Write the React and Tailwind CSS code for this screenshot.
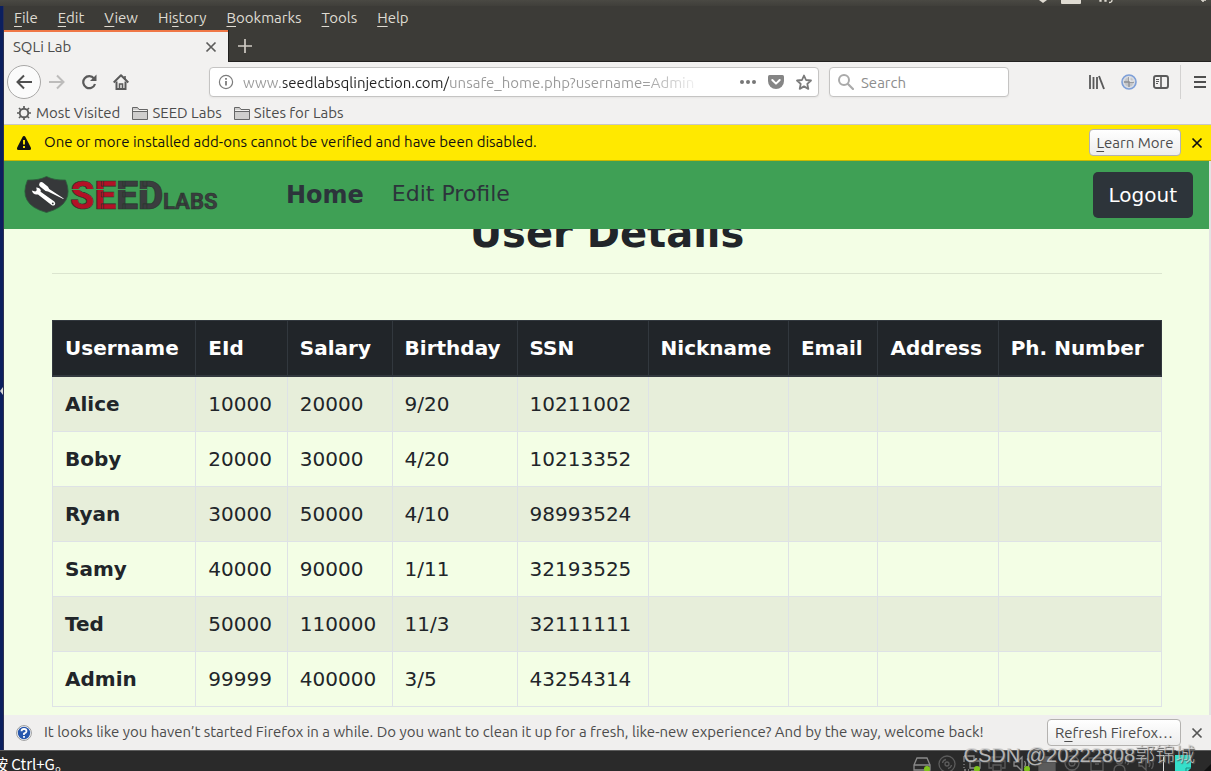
import React from "react";

const uiFont = "font-['Ubuntu','Open_Sans','Noto_Sans_CJK_SC',sans-serif]";

const menus = [
  ["", "F", "ile"],
  ["", "E", "dit"],
  ["", "V", "iew"],
  ["Hi", "s", "tory"],
  ["", "B", "ookmarks"],
  ["", "T", "ools"],
  ["", "H", "elp"],
];

const columns = ["Username", "EId", "Salary", "Birthday", "SSN", "Nickname", "Email", "Address", "Ph. Number"];

const rows = [
  ["Alice", "10000", "20000", "9/20", "10211002"],
  ["Boby", "20000", "30000", "4/20", "10213352"],
  ["Ryan", "30000", "50000", "4/10", "98993524"],
  ["Samy", "40000", "90000", "1/11", "32193525"],
  ["Ted", "50000", "110000", "11/3", "32111111"],
  ["Admin", "99999", "400000", "3/5", "43254314"],
];

function Key({ children }) {
  return <span className="underline decoration-1 underline-offset-3">{children}</span>;
}

function Icon({ size = 16, children, ...rest }) {
  return (
    <svg width={size} height={size} viewBox={`0 0 ${size} ${size}`} fill="none" aria-hidden="true" className="block shrink-0" {...rest}>
      {children}
    </svg>
  );
}

function Cross({ color = "#555", width = 1.7 }) {
  return (
    <Icon size={12}>
      <path d="M1.500 1.500l9 9M10.500 1.500l-9 9" stroke={color} strokeWidth={width} />
    </Icon>
  );
}

function TopPanel() {
  return (
    <div className="flex h-[6px] shrink-0 justify-end overflow-hidden bg-linear-to-b from-[#4a4943] to-[#403f3a]">
      <svg width="180" height="6" viewBox="0 0 180 6" aria-hidden="true">
        <path d="M8 0h8l-4 3z" fill="#dfdbd2" />
        <path d="M30 0h20v3q0 1-1 1H31q-1 0-1-1z" fill="#dfdbd2" />
        <path d="M69 0h1v1h-1zM74 0h1v1h-1zM81 0q0 2.500-3 2.500" stroke="#dfdbd2" strokeWidth="1.300" fill="none" />
        <path d="M170 0h5M172 0v2" stroke="#dfdbd2" strokeWidth="1.500" />
      </svg>
    </div>
  );
}

function MenuBar() {
  return (
    <nav aria-label="Menu" className="flex h-6 items-center gap-5 bg-[#3c3b37] pl-[10px] text-[15px] leading-6 text-[#dfdbd2]">
      {menus.map(([a, k, b]) => (
        <button key={a + k + b} type="button" className="whitespace-nowrap">
          {a}
          <Key>{k}</Key>
          {b}
        </button>
      ))}
    </nav>
  );
}

function TabStrip() {
  return (
    <div className="flex h-8 bg-[#3c3b37]">
      <div className="flex w-[224px] items-center justify-between border-t-2 border-[#f07746] bg-[#f2f1f0] pr-[11px] pl-[9px] text-[15px] text-[#4c4c4c]">
        <span className="leading-6">SQLi Lab</span>
        <button type="button" aria-label="Close tab">
          <Cross color="#5d5c5b" />
        </button>
      </div>
      <div className="flex flex-1 items-center border-b border-l border-[#222120] pl-[9px]">
        <button type="button" aria-label="New tab">
          <Icon size={14}>
            <path d="M7 0v14M0 7h14" stroke="#cfcbc4" strokeWidth="1.700" />
          </Icon>
        </button>
      </div>
    </div>
  );
}

function Toolbar() {
  return (
    <div className="flex h-10 items-center bg-[#f2f1f0] pl-[3px] text-[15px] text-[#5c5c5c]">
      <button type="button" aria-label="Back" className="flex size-[34px] items-center justify-center rounded-full border border-[#a9a8a7] bg-[#fbfbfb]">
        <Icon>
          <path d="M8 1.500L1.500 8 8 14.500M1.500 8H16" stroke="#4f4f4f" strokeWidth="2" />
        </Icon>
      </button>
      <button type="button" aria-label="Forward" className="ml-2">
        <Icon>
          <path d="M8 1.500L14.500 8 8 14.500M14.500 8H0" stroke="#bdbcbb" strokeWidth="2" />
        </Icon>
      </button>
      <button type="button" aria-label="Reload" className="ml-4">
        <Icon>
          <path d="M13 4.500A6 6 0 1 0 14 10" stroke="#5a5a5a" strokeWidth="2.200" />
          <path d="M15.500 0.500v6.500H9z" fill="#5a5a5a" />
        </Icon>
      </button>
      <button type="button" aria-label="Home" className="ml-4">
        <Icon>
          <path d="M0.700 8.500L8 1.300l7.300 7.200" stroke="#5a5a5a" strokeWidth="2" strokeLinejoin="round" />
          <path d="M3.500 7.500V15h9V7.500" stroke="#5a5a5a" strokeWidth="2" />
          <path d="M12 2v4M6.500 15v-5h3v5z" stroke="#5a5a5a" strokeWidth="1.600" />
        </Icon>
      </button>

      <div className="ml-20 flex h-[30px] flex-1 items-center rounded border border-[#c5c4c3] bg-white pr-[6px] pl-2 shadow-xs">
        <Icon>
          <circle cx="8" cy="8" r="6.600" stroke="#7c7c7c" strokeWidth="1.200" />
          <path d="M8 7v4.500M8 4v1.800" stroke="#7c7c7c" strokeWidth="1.800" />
        </Icon>
        <input
          aria-label="Address"
          type="text"
          defaultValue="www.seedlabsqlinjection.com/unsafe_home.php?username=Admin"
          className="ml-[9px] h-6 w-0 min-w-0 flex-1 bg-[linear-gradient(90deg,#999_0px,#999_40px,#222_40px,#222_206px,#999_206px,#999_400px,transparent_460px)] bg-clip-text text-[15px] text-transparent outline-none"
        />
        <button type="button" aria-label="Page actions" className="ml-[38px]">
          <Icon>
            <g fill="#777">
              <circle cx="2" cy="8" r="2" />
              <circle cx="8" cy="8" r="2" />
              <circle cx="14" cy="8" r="2" />
            </g>
          </Icon>
        </button>
        <button type="button" aria-label="Save to Pocket" className="ml-3">
          <Icon>
            <path d="M1.500 1h13q1.500 0 1.500 1.500V7a8 8 0 0 1-16 0V2.500Q0 1 1.500 1z" fill="#858585" />
            <path d="M4.300 6l3.700 3.600L11.700 6" stroke="#fff" strokeWidth="2" strokeLinecap="round" strokeLinejoin="round" />
          </Icon>
        </button>
        <button type="button" aria-label="Bookmark this page" className="ml-3">
          <Icon>
            <path d="M8 1.500l2 4.500 5 .5-3.700 3.400 1 5L8 12.400 3.700 14.900l1-5L1 6.500l5-.5z" stroke="#7a7a7a" strokeWidth="1.800" strokeLinejoin="round" />
          </Icon>
        </button>
      </div>

      <div className="ml-[10px] flex h-[30px] w-[180px] items-center rounded border border-[#c5c4c3] bg-white pl-2 shadow-xs">
        <Icon>
          <circle cx="6" cy="6" r="5" stroke="#aaa" strokeWidth="2" />
          <path d="M9.700 9.700l6 6" stroke="#aaa" strokeWidth="2.200" />
        </Icon>
        <input aria-label="Search" type="text" placeholder="Search" className="ml-[7px] h-6 w-0 min-w-0 flex-1 text-[15px] outline-none placeholder:text-[#8d8d8d]" />
      </div>

      <button type="button" aria-label="Library" className="ml-20">
        <Icon>
          <path d="M1 1v14M4.500 3v12M8 3v12" stroke="#5a5a5a" strokeWidth="1.800" />
          <path d="M10 2l5 13" stroke="#5a5a5a" strokeWidth="1.900" />
        </Icon>
      </button>
      <button type="button" aria-label="Add-on" className="ml-4">
        <Icon>
          <circle cx="8" cy="8" r="7" fill="#d8dbe0" stroke="#7d9fd8" strokeWidth="1.600" />
          <circle cx="8" cy="8" r="4.500" fill="#c3c5c9" />
          <path d="M8 3v10M3 8h10" stroke="#8b8d91" strokeWidth="1.300" />
          <path d="M8.800 3v4.200h4" stroke="#fff" strokeWidth="1" />
        </Icon>
      </button>
      <button type="button" aria-label="Sidebars" className="ml-4">
        <Icon>
          <rect x="1" y="2" width="14" height="12" rx="2" stroke="#5a5a5a" strokeWidth="1.900" />
          <path d="M8 2v12" stroke="#5a5a5a" strokeWidth="1.600" />
          <path d="M3 5.500h3M3 7.500h3M3 9.500h2" stroke="#5a5a5a" />
        </Icon>
      </button>
      <div className="ml-[11px] h-[34px] border-l border-[#d3d2d1] pl-[13px]">
        <button type="button" aria-label="Open menu" className="flex h-full w-[17px] items-center overflow-hidden">
          <Icon>
            <path d="M0 3h12M0 8h12M0 13h12" stroke="#4f4f4f" strokeWidth="1.800" />
          </Icon>
        </button>
      </div>
    </div>
  );
}

function Folder() {
  return (
    <Icon>
      <path d="M.5 14.500v-12h5l1.500 2h8.500v10z" fill="#cfcecd" stroke="#666" />
      <path d="M1 6.500h14" stroke="#666" />
      <path d="M1 5.500h14" stroke="#f2f1f0" />
    </Icon>
  );
}

function BookmarkBar() {
  return (
    <div className="flex h-[23px] items-center gap-3 border-b border-[#c9c8c6] bg-[#f2f1f0] pl-3 text-[15px] leading-5 text-[#4c4c4c]">
      <a href="#most" className="flex items-center gap-1">
        <Icon>
          <circle cx="8" cy="8" r="4.300" stroke="#5c5c5c" strokeWidth="1.900" />
          <path d="M8 1v3M8 12v3M1 8h3M12 8h3M3 3l2 2M11 11l2 2M13 3l-2 2M5 11l-2 2" stroke="#5c5c5c" strokeWidth="1.700" />
        </Icon>
        Most Visited
      </a>
      <a href="#seed" className="flex items-center gap-1">
        <Folder />
        SEED Labs
      </a>
      <a href="#sites" className="flex items-center gap-1">
        <Folder />
        Sites for Labs
      </a>
    </div>
  );
}

const noticeButton = "h-[27px] rounded border border-[#b4b2b0] bg-linear-to-b from-white to-[#ededed] text-[15px] leading-5 text-[#4c4c4c]";

function AddonNotice() {
  return (
    <div className="flex h-9 items-center border-b border-[#c9b800] bg-[#ffe900] pr-2 pl-3 text-[15px] text-[#111]">
      <Icon>
        <path d="M8 1q1 0 1.600 1.200l5.200 10.300q.8 2.500-1.300 2.500h-11Q.4 15 1.200 12.500L6.400 2.200Q7 1 8 1z" fill="#111" />
        <path d="M8 5v4.500M8 11v2" stroke="#ffe900" strokeWidth="1.900" />
      </Icon>
      <span className="ml-3 flex-1">One or more installed add-ons cannot be verified and have been disabled.</span>
      <button type="button" className={`${noticeButton} w-[92px]`}>
        <Key>L</Key>earn More
      </button>
      <button type="button" aria-label="Dismiss" className="ml-[10px]">
        <Cross color="#111" />
      </button>
    </div>
  );
}

function SeedLogo() {
  return (
    <svg width="200" height="48" viewBox="0 -4 200 48" role="img" aria-label="SEED Labs">
      <path d="M22.500 1.500Q30.500 5.500 41.500 5 46.500 17 42 25 37.500 33.500 22.500 37.500 7.500 33.500 3 25-1.500 17 3.500 5 14.500 5.500 22.500 1.500z" fill="#36383a" stroke="#2c5f3c" strokeWidth=".8" />
      <path d="M15.800 7.500q1.700-1.200 3 0l5.200 4.300 1.200 2.200 14.500 9.500-.4.600L24 16.500l-2.400-.6-5.600-4.500q-1.500-1.800-.2-3.900z" fill="#fff" />
      <path d="M7.800 15.500l3.500 1 1.500-1.200-.6-2.800q3.400-.4 4.600 2.500l-.2 1.800 13.700 9.800q1.700 1.700.5 3.400-1.700 1.200-3.300 0L14 19.400q-4.800 1-6.200-3.900z" fill="#fff" />
      <circle cx="28.800" cy="28.400" r=".9" fill="#36383a" />
      <g fontFamily="Roboto, sans-serif" fontWeight="900" stroke="#25352b" strokeWidth=".6">
        <text x="46" y="34" fontSize="39">
          <tspan fill="#b31126">SE</tspan>
          <tspan fill="#3b3d3f">ED</tspan>
        </text>
        <text x="139" y="34" fontSize="22" fontWeight="700" fill="#3b3d3f">LABS</text>
      </g>
      <path d="M47 14.500h76" stroke="#3fa055" strokeWidth="1" />
    </svg>
  );
}

function SiteNav() {
  return (
    <header className="relative z-10 flex h-[68px] shrink-0 items-center bg-[#3fa055] pr-4 pl-5 text-[#2c343b]">
      <a href="#home" className="mr-[62px]">
        <SeedLogo />
      </a>
      <nav aria-label="Site" className="flex flex-1 items-start gap-7">
        <a href="#home" className="text-[24px] leading-9 font-bold">Home</a>
        <a href="#profile" className="text-[22px] leading-[34px]">Edit Profile</a>
      </nav>
      <button type="button" className="rounded-[5px] bg-[#2d343a] px-4 py-2 text-[20px] leading-[30px] text-white">
        Logout
      </button>
    </header>
  );
}

function UserDetails() {
  return (
    <main className="flex-1 overflow-hidden pr-[47px] pb-2 pl-12 text-[20px] leading-[30px] text-[#212529]">
      <h1 className="-mt-5 text-center text-[40px] leading-[48px] font-bold">User Details</h1>
      <hr className="mt-4 mb-[46px] border-t border-[#dbe5cf]" />
      <table className="w-full border-collapse border border-[#dee2e6] text-left">
        <thead>
          <tr className="bg-[#212529] text-white">
            {columns.map((c) => (
              <th key={c} scope="col" className="border border-b-2 border-[#32383e] p-3 whitespace-nowrap">
                {c}
              </th>
            ))}
          </tr>
        </thead>
        <tbody>
          {rows.map((r) => (
            <tr key={r[0]} className="odd:bg-[#e7eeda]">
              {columns.map((c, i) =>
                i === 0 ? (
                  <th key={c} scope="row" className="border border-[#dee2e6] p-3">{r[0]}</th>
                ) : (
                  <td key={c} className="border border-[#dee2e6] p-3">{r[i]}</td>
                )
              )}
            </tr>
          ))}
        </tbody>
      </table>
    </main>
  );
}

function RefreshNotice() {
  return (
    <div className={`${uiFont} flex h-[35px] shrink-0 items-center bg-[#f0efee] pr-2 pl-3 text-[15px] text-[#4c4c4c]`}>
      <Icon>
        <circle cx="8" cy="8" r="7.400" fill="#fff" stroke="#999" strokeWidth="1" />
        <circle cx="8" cy="8" r="6.200" fill="#2757ad" />
        <path d="M5.500 6.300Q5.600 4 8 4t2.500 2.200Q10.500 7.600 8 8.600V10M8 11v1.700" stroke="#fff" strokeWidth="1.800" />
      </Icon>
      <span className="ml-3 flex-1 whitespace-nowrap">
        It looks like you haven’t started Firefox in a while. Do you want to clean it up for a fresh, like-new experience? And by the way, welcome back!
      </span>
      <button type="button" className={`${noticeButton} w-[134px] whitespace-nowrap`}>
        R<Key>e</Key>fresh Firefox…
      </button>
      <button type="button" aria-label="Dismiss" className="ml-[10px]">
        <Cross />
      </button>
    </div>
  );
}

const trayIcons = [
  { name: "disk", color: "#8a8a8a", on: true, shape: <path d="M1 10l3-7h10l3 7v5H1zM1 10h16M13 12.500h2" /> },
  { name: "cd", color: "#5c5c5c", shape: <path d="M17 9A8 8 0 1 1 1 9a8 8 0 0 1 16 0zM11 9a2 2 0 1 1-4 0 2 2 0 0 1 4 0zM4.500 8Q5 5 8 4.500M13.500 10Q13 13 10 13.500" /> },
  { name: "network", color: "#8a8a8a", on: true, shape: <path d="M7 6h10v7H7zM1 1h10v5M1 1v6M12 13v3M8 16h8M1 9v1M1 12v1M1 15h2M5 15h1" /> },
  { name: "printer", color: "#5c5c5c", shape: <path d="M4 6V2h10v4M4 13H1V6h16v7h-3M5 10h8v6H5z" /> },
  { name: "sound", color: "#8a8a8a", on: true, shape: <path d="M1 7h3l5-5v14l-5-5H1zM11.500 6q2 3 0 6M14 3.500q4 5.500 0 11" /> },
  { name: "usb", color: "#5c5c5c", shape: <path d="M5 7V2h8v5M1 8h16v9H1z" fill="#5c5c5c" /> },
  { name: "camera", color: "#5c5c5c", shape: <path d="M16 8A7 7 0 1 1 2 8a7 7 0 0 1 14 0zM12 8a3 3 0 1 1-6 0 3 3 0 0 1 6 0zM9 7.500v1M5 16.500h8" /> },
  { name: "archive", color: "#5c5c5c", shape: <path d="M1 3h16v3H1zM3 6v10h12V6M7 9h4" /> },
  { name: "voice", color: "#5c5c5c", shape: <path d="M9.500 6a3 3 0 1 1-6 0 3 3 0 0 1 6 0zM1 16q0-6 5.500-6t5.500 6M12 4q1.500 2 0 4.500M14.500 2.500q2.500 3.500 0 7.500" /> },
  { name: "speaker", color: "#5c5c5c", shape: <path d="M1 7h3l4-4v12l-4-4H1zM11 6q2 3 0 6M13.500 4q3.500 5 0 10" /> },
];

function StatusBar() {
  return (
    <footer className="relative h-[21px] shrink-0 border-t border-[#5d5d5d] bg-[#2a2a2a]">
      <div className="flex h-5 items-start justify-between overflow-hidden">
        <span className="-ml-[7px] pt-[3px] font-['Noto_Sans_CJK_SC',sans-serif] text-[15px] leading-5 whitespace-nowrap text-white">按 Ctrl+G。</span>
        <div className="flex items-start gap-[7px] pt-1">
          {trayIcons.map((t) => (
            <Icon key={t.name} size={18}>
              <g stroke={t.color} strokeWidth="1.300">{t.shape}</g>
              {t.on && <circle cx="14" cy="14" r="3" fill="#7fc31c" />}
            </Icon>
          ))}
          <span className="h-5 border-l border-[#ddd]" />
          <svg width="40" height="18" viewBox="0 0 40 18" aria-hidden="true">
            <path d="M4 0h16v13l-5 5H4z" fill="#35e0cb" />
            <path d="M15 18v-5h5" stroke="#1b8f85" fill="none" />
            <path d="M40 9l-9 9h9z" fill="#111" />
          </svg>
        </div>
      </div>
      <span className="pointer-events-none absolute right-4 bottom-1 font-['Liberation_Sans','Noto_Sans_CJK_SC',sans-serif] text-[20px] leading-6 font-light whitespace-nowrap text-[#d4d4d4]/80 [text-shadow:1px_1px_1px_#555]">
        CSDN @20222808郭锦城
      </span>
    </footer>
  );
}

export default function App() {
  return (
    <div className="flex min-h-screen flex-col overflow-hidden bg-[#2a2a2a] font-['DejaVu_Sans',sans-serif]">
      <TopPanel />
      <div className="flex flex-1">
        <div className="flex w-1 shrink-0 items-center border-r border-[#2c3050] bg-[#0b1f5e]">
          <svg width="3" height="8" viewBox="0 0 3 8" className="mt-[26px]" aria-hidden="true">
            <path d="M3 0v8L0 4z" fill="#d8d8d8" />
          </svg>
        </div>
        <div className="flex min-w-0 flex-1 flex-col">
          <div className={uiFont}>
            <MenuBar />
            <TabStrip />
            <Toolbar />
            <BookmarkBar />
            <AddonNotice />
          </div>
          <div className="flex flex-1 flex-col border-r-2 border-[#e3e3e3] bg-[#f3fee5]">
            <SiteNav />
            <UserDetails />
          </div>
          <RefreshNotice />
        </div>
      </div>
      <StatusBar />
    </div>
  );
}
